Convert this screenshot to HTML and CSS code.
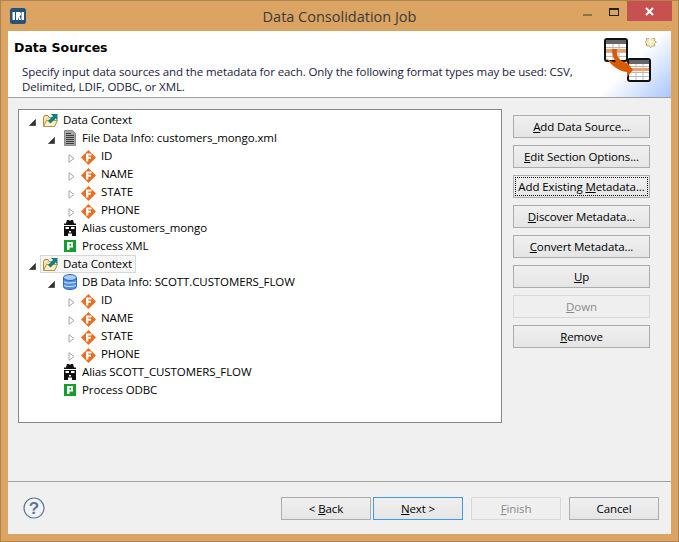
FILE: index.html
```html
<!DOCTYPE html>
<html lang="en">
<head>
<meta charset="utf-8">
<title>Data Consolidation Job</title>
<link rel="stylesheet" href="styles.css">
</head>
<body>
<svg class="defs" width="0" height="0" aria-hidden="true">
  <defs>
    <symbol id="i-folder" viewBox="0 0 17 16">
      <path d="M1.5 5.5V14.5H12.5V5.5H7L6 3.5H2.5Z" fill="#f6e2a8" stroke="#a98a4a"/>
      <path d="M1.5 14.5L4.5 8.5H15.5L12.5 14.5Z" fill="#fbeec6" stroke="#b8924c"/>
      <path d="M6 9L11 4L9 2H15.5V8.5L13.5 6.5L8.5 11.5Z" fill="#12807c"/>
    </symbol>
    <symbol id="i-file" viewBox="0 0 14 16">
      <path d="M1.5 .5H9.5L12.5 3.5V15.5H1.5Z" fill="#a6a6a6" stroke="#8a8a8a"/>
      <path d="M3 3.5H8M3 5.5H11M3 7.5H11M3 9.5H11M3 11.5H11M3 13.5H11" stroke="#3d3d3d"/>
    </symbol>
    <symbol id="i-db" viewBox="0 0 14 16">
      <path d="M.5 3.5V12.5C.5 14.4 3.5 15.5 7 15.5S13.5 14.4 13.5 12.5V3.5Z" fill="#4f8fe6" stroke="#2b62b8"/>
      <ellipse cx="7" cy="3.5" rx="6.5" ry="3" fill="#a9cdf7" stroke="#2b62b8"/>
      <path d="M.8 7.5C2 9.5 12 9.5 13.2 7.5M.8 11C2 13 12 13 13.2 11" fill="none" stroke="#d6e8fc"/>
    </symbol>
    <symbol id="i-field" viewBox="0 0 15 15">
      <path d="M7.5 0L15 7.5L7.5 15L0 7.5Z" fill="#f26b1d"/>
      <path d="M5 3.5H10.5V5.5H7.3V6.8H10V8.8H7.3V11.5H5Z" fill="#fff"/>
    </symbol>
    <symbol id="i-alias" viewBox="0 0 14 16">
      <path d="M4 0H6L7 1L8 0H10L11 3.5H13V5H1V3.5H3Z" fill="#111"/>
      <path d="M1 6H13V16H9V13.5H5V16H1Z" fill="#111"/>
      <path d="M2.5 7H6V9H2.5ZM8 7H11.5V9H8ZM6 11H8V12.5H6Z" fill="#fff"/>
    </symbol>
    <symbol id="i-proc" viewBox="0 0 12 12">
      <rect width="12" height="12" fill="#12a02c"/>
      <path d="M3 2H9V7.5H5.5V10H3ZM5.5 4V5.7H7V4Z" fill="#fff" fill-rule="evenodd"/>
    </symbol>
    <symbol id="t-open" viewBox="0 0 7 7">
      <path d="M6.5 .5V6.5H.5Z" fill="#333" stroke="#555"/>
    </symbol>
    <symbol id="t-closed" viewBox="0 0 7 9">
      <path d="M1 .7L6 4.5L1 8.3Z" fill="#fff" stroke="#a6a6a6"/>
    </symbol>
  </defs>
</svg>
<div class="window">
  <header class="titlebar">
    <svg class="app-logo" viewBox="0 0 16 16" width="16" height="16">
      <rect width="16" height="16" rx="2.5" fill="#25537c"/>
      <path d="M2.5 4H5V12H2.5ZM6 4H9.5C11.5 4 11.5 8 9.5 8L11 12H9L8 8.5V12H6ZM11.5 4H14V12H11.5Z" fill="#fff"/>
    </svg>
    <h1 class="window-title">Data Consolidation Job</h1>
    <div class="controls">
      <span class="ctl-min"></span>
      <span class="ctl-max"></span>
      <span class="ctl-close">
        <svg viewBox="0 0 9 9" width="9" height="9"><path d="M1 1L8 8M8 1L1 8" stroke="#fff" stroke-width="2"/></svg>
      </span>
    </div>
  </header>
  <main class="dialog">
    <section class="banner">
      <div class="banner-text">
        <h2 class="banner-title">Data Sources</h2>
        <p class="banner-desc">Specify input data sources and the metadata for each. Only the following format types may be used: CSV, Delimited, LDIF, ODBC, or XML.</p>
      </div>
      <div class="banner-art">
        <svg class="banner-icon" viewBox="0 0 56 50" width="56" height="50">
          <path d="M47.5 0L50 2.5H53V5.5L55 7.5L53 9.5V12.5H50L47.5 15L45 12.5H42V9.5L40 7.5L42 5.5V2.5H45Z" transform="translate(12 -1.5) scale(.75)" fill="#f0e6bd" stroke="#bda765" stroke-width="1.3"/>
          <path d="M47.5 4V11M44 7.5H51" transform="translate(12 -1.5) scale(.75)" stroke="#fff" stroke-width="1.3"/>
          <rect x="2" y="1" width="22" height="22" rx="2" fill="#fff" stroke="#111" stroke-width="2"/>
          <rect x="3" y="2" width="20" height="4" fill="#666"/>
          <rect x="3" y="11" width="20" height="3" fill="#f79a5e"/>
          <path d="M3 9.5H23M3 14.5H23M3 18.5H23M10 6V22M16 6V22" stroke="#bbb"/>
          <rect x="25" y="21" width="22" height="22" rx="2" fill="#fff" stroke="#111" stroke-width="2"/>
          <rect x="26" y="22" width="20" height="4" fill="#666"/>
          <rect x="26" y="30" width="20" height="3" fill="#f79a5e"/>
          <path d="M26 28.5H46M26 34.5H46M26 38.5H46M33 26V42M40 26V42" stroke="#bbb"/>
          <path d="M9 11H14C13 18 16 23 24 25V24L30 32L24 39V34C15 33 8 27 3 20C7 23 10 24 13 24C10 20 9 16 9 11Z" fill="#d95a04"/>
        </svg>
      </div>
    </section>
    <section class="content">
      <div class="tree">
        <div class="row l0"><svg class="tw tw-open"><use href="#t-open"/></svg><svg class="ic ic-folder"><use href="#i-folder"/></svg><span class="label">Data Context</span></div>
        <div class="row l1"><svg class="tw tw-open"><use href="#t-open"/></svg><svg class="ic"><use href="#i-file"/></svg><span class="label">File Data Info: customers_mongo.xml</span></div>
        <div class="row l2"><svg class="tw tw-closed"><use href="#t-closed"/></svg><svg class="ic"><use href="#i-field"/></svg><span class="label">ID</span></div>
        <div class="row l2"><svg class="tw tw-closed"><use href="#t-closed"/></svg><svg class="ic"><use href="#i-field"/></svg><span class="label">NAME</span></div>
        <div class="row l2"><svg class="tw tw-closed"><use href="#t-closed"/></svg><svg class="ic"><use href="#i-field"/></svg><span class="label">STATE</span></div>
        <div class="row l2"><svg class="tw tw-closed"><use href="#t-closed"/></svg><svg class="ic"><use href="#i-field"/></svg><span class="label">PHONE</span></div>
        <div class="row l1"><span class="tw"></span><svg class="ic"><use href="#i-alias"/></svg><span class="label">Alias customers_mongo</span></div>
        <div class="row l1"><span class="tw"></span><svg class="ic ic-proc"><use href="#i-proc"/></svg><span class="label">Process XML</span></div>
        <div class="row l0"><svg class="tw tw-open"><use href="#t-open"/></svg><span class="selected"><svg class="ic ic-folder"><use href="#i-folder"/></svg><span class="label">Data Context</span></span></div>
        <div class="row l1"><svg class="tw tw-open"><use href="#t-open"/></svg><svg class="ic"><use href="#i-db"/></svg><span class="label">DB Data Info: SCOTT.CUSTOMERS_FLOW</span></div>
        <div class="row l2"><svg class="tw tw-closed"><use href="#t-closed"/></svg><svg class="ic"><use href="#i-field"/></svg><span class="label">ID</span></div>
        <div class="row l2"><svg class="tw tw-closed"><use href="#t-closed"/></svg><svg class="ic"><use href="#i-field"/></svg><span class="label">NAME</span></div>
        <div class="row l2"><svg class="tw tw-closed"><use href="#t-closed"/></svg><svg class="ic"><use href="#i-field"/></svg><span class="label">STATE</span></div>
        <div class="row l2"><svg class="tw tw-closed"><use href="#t-closed"/></svg><svg class="ic"><use href="#i-field"/></svg><span class="label">PHONE</span></div>
        <div class="row l1"><span class="tw"></span><svg class="ic"><use href="#i-alias"/></svg><span class="label">Alias SCOTT_CUSTOMERS_FLOW</span></div>
        <div class="row l1"><span class="tw"></span><svg class="ic ic-proc"><use href="#i-proc"/></svg><span class="label">Process ODBC</span></div>
      </div>
      <div class="side-buttons">
        <button class="btn"><span><u>A</u>dd Data Source...</span></button>
        <button class="btn"><span><u>E</u>dit Section Options...</span></button>
        <button class="btn btn-focus"><span class="focus-ring">Add Existing <u>M</u>etadata...</span></button>
        <button class="btn"><span><u>D</u>iscover Metadata...</span></button>
        <button class="btn"><span><u>C</u>onvert Metadata...</span></button>
        <button class="btn"><span><u>U</u>p</span></button>
        <button class="btn btn-disabled"><span><u>D</u>own</span></button>
        <button class="btn"><span><u>R</u>emove</span></button>
      </div>
    </section>
    <footer class="footer">
      <svg class="help" viewBox="0 0 22 22" width="22" height="22">
        <circle cx="11" cy="11" r="10" fill="#f2f3f5" stroke="#5f7398" stroke-width="1.2"/>
        <text x="11" y="17" text-anchor="middle" class="help-mark">?</text>
      </svg>
      <div class="nav-buttons">
        <div class="nav-pair">
          <button class="btn btn-nav"><span>&lt; <u>B</u>ack</span></button>
          <button class="btn btn-nav btn-default"><span><u>N</u>ext &gt;</span></button>
        </div>
        <button class="btn btn-nav btn-disabled"><span><u>F</u>inish</span></button>
        <button class="btn btn-nav"><span>Cancel</span></button>
      </div>
    </footer>
  </main>
</div>
</body>
</html>
```
FILE: styles.css
```css
* { box-sizing: border-box; }
html, body { margin: 0; padding: 0; }
body {
  width: 679px;
  height: 542px;
  overflow: hidden;
  font-family: "Open Sans", "Noto Sans", sans-serif;
  font-size: 11.5px;
  letter-spacing: -0.1px;
  color: #000;
}
.defs { position: absolute; }
.window {
  width: 679px;
  height: 542px;
  display: flex;
  flex-direction: column;
  background: #dba462;
  border: 1px solid #ac854f;
  padding: 0 7px 7px;
}
.titlebar {
  height: 30px;
  flex: none;
  display: flex;
  align-items: flex-start;
  position: relative;
}
.app-logo { margin: 7px 0 0 2px; }
.window-title {
  position: absolute;
  left: 0;
  right: 0;
  top: 6px;
  margin: 0;
  text-align: center;
  font-size: 14.5px;
  letter-spacing: 0;
  line-height: 20px;
  font-weight: 400;
  color: #3a3a3a;
}
.controls {
  position: absolute;
  top: 0;
  right: -1px;
  display: flex;
  align-items: flex-start;
}
.ctl-min {
  width: 9px;
  height: 2px;
  background: #8c6f4b;
  margin: 13px 17px 0 0;
}
.ctl-max {
  width: 10px;
  height: 8px;
  border: 1px solid #222;
  border-top-width: 2px;
  margin: 7px 8px 0 0;
}
.ctl-close {
  width: 45px;
  height: 20px;
  background: #c75050;
  display: flex;
  align-items: center;
  justify-content: center;
}
.dialog {
  flex: 1;
  min-height: 0;
  display: flex;
  flex-direction: column;
  background: #f0f0f0;
}
.banner {
  height: 67px;
  flex: none;
  display: flex;
  justify-content: space-between;
  background: #fff;
  border-bottom: 1px solid #a0a0a0;
}
.banner-text { padding: 8px 0 0 6px; width: 590px; }
.banner-title {
  margin: 0;
  font-family: "DejaVu Sans", sans-serif;
  font-size: 12.5px;
  letter-spacing: 0;
  line-height: 18px;
  font-weight: 700;
}
.banner-desc {
  margin: 7px 0 0 8px;
  line-height: 15px;
  color: #1a1a3a;
}
.banner-art {
  width: 76px;
  background: linear-gradient(135deg, #fff 48%, #a9c6fb 100%);
  padding: 7px 0 0 8px;
}
.banner-icon { display: block; }
.content {
  flex: 1;
  min-height: 0;
  display: flex;
  padding: 11px 21px 0 10px;
  justify-content: space-between;
  align-items: flex-start;
}
.tree {
  width: 484px;
  height: 314px;
  background: #fff;
  border: 1px solid #828790;
  padding-top: 1px;
}
.row {
  height: 18px;
  display: flex;
  align-items: center;
  white-space: nowrap;
}
.l0 { padding-left: 10px; }
.l1 { padding-left: 29px; }
.l2 { padding-left: 49px; }
.tw { width: 7px; height: 7px; flex: none; margin: 4px 6px 0 0; }
.tw-closed { height: 9px; margin-right: 5px; }
.ic { width: 14px; height: 16px; flex: none; margin-right: 5px; }
.l1 .ic { margin-left: 2px; }
.ic-folder { width: 17px; margin-right: 4px; }
.l1 .ic-proc { width: 12px; height: 12px; margin-left: 3px; margin-right: 6px; }
.l2 .ic { width: 15px; height: 15px; margin: 2px 5px 0 1px; }
.label { line-height: 16px; }
.selected {
  display: flex;
  align-items: center;
  height: 18px;
  margin-left: -2px;
  padding: 0 3px 0 1px;
  border: 1px solid #d8d8d8;
  background: #f6f6f6;
}
.side-buttons {
  width: 137px;
  padding-top: 6px;
  display: flex;
  flex-direction: column;
  gap: 7px;
}
.btn {
  height: 23px;
  padding: 0;
  font: inherit;
  letter-spacing: inherit;
  white-space: nowrap;
  color: #000;
  background: linear-gradient(#f0f0f0, #e5e5e5);
  border: 1px solid #acacac;
  display: flex;
  align-items: center;
  justify-content: center;
}
.btn-focus { padding: 1px; }
.focus-ring {
  flex: 1;
  height: 19px;
  line-height: 17px;
  border: 1px dotted #000;
}
.btn-disabled {
  background: #efefef;
  border-color: #d9d9d9;
  color: #8a8a8a;
}
.btn-default { border-color: #3c9bf0; }
.footer {
  height: 53px;
  flex: none;
  display: flex;
  justify-content: space-between;
  padding: 15px 12px 0 15px;
  border-top: 1px solid #a0a0a0;
}
.help { display: block; margin-top: 0; }
.help-mark { font-family: "Liberation Sans", sans-serif; font-size: 17px; font-weight: 700; fill: #5f7398; }
.nav-buttons { display: flex; gap: 8px; }
.nav-pair { display: flex; gap: 2px; }
.btn-nav { width: 90px; }
```
